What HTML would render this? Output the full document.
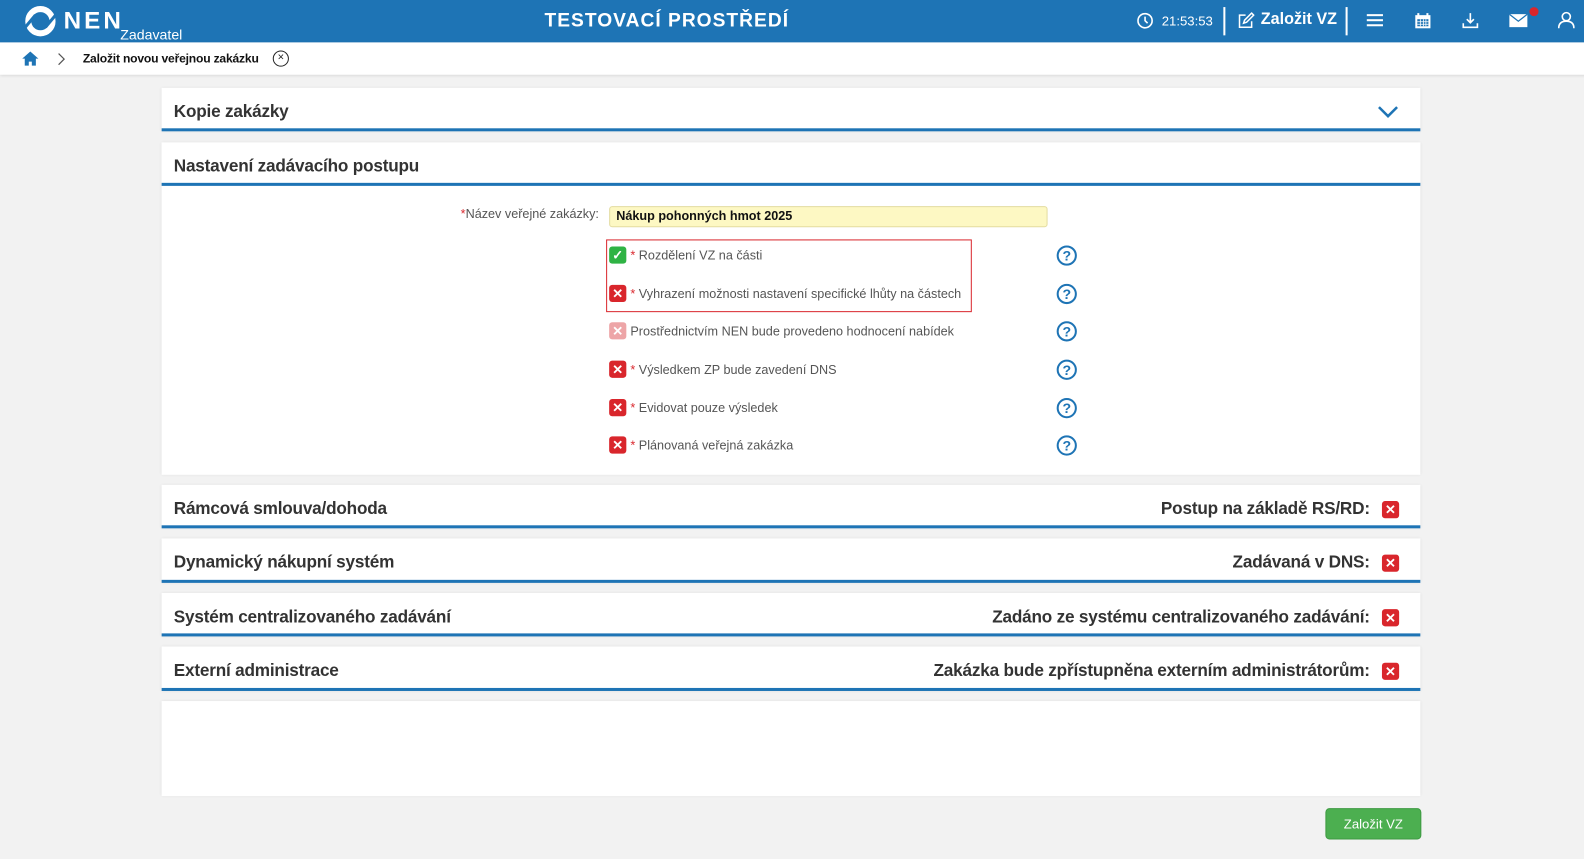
<!DOCTYPE html>
<html><head><meta charset="utf-8"><style>
*{margin:0;padding:0;box-sizing:border-box}
body{width:1584px;height:850px;background:#f2f2f2;font-family:"Liberation Sans",sans-serif;position:relative;overflow:hidden;color:#333}
#w{position:absolute;left:0;top:0;width:1584px;height:850px;transform:scale(1.0102);transform-origin:0 0}
.top{position:absolute;left:0;top:0;width:1584px;height:42px;background:#1e74b5;color:#fff}
.bc{position:absolute;left:0;top:42px;width:1584px;height:32px;background:#fff;box-shadow:0 1px 3px rgba(0,0,0,.12)}
.abs{position:absolute}
.panel{position:absolute;left:160px;width:1246px;background:#fff;border-bottom:3px solid #1e74b5;box-shadow:0 0 3px rgba(0,0,0,.08)}
.ph{position:absolute;left:12px;font-size:17px;letter-spacing:-0.2px;font-weight:bold;color:#333}
.pr{position:absolute;right:50px;font-size:17px;letter-spacing:-0.2px;font-weight:bold;color:#333}
.xb{position:absolute;width:17px;height:17px;border-radius:3px;background:#d9262c;color:#fff;font-size:13px;font-weight:bold;text-align:center;line-height:17px}
.row{position:absolute;left:603px;font-size:12.5px;color:#555;height:18px;line-height:18px}
.row .xb,.row .cb{left:0;top:0}
.row span.t{position:absolute;left:21px;white-space:nowrap}
.cb{position:absolute;width:17px;height:17px;border-radius:3px;background:#2fb344;color:#fff;text-align:center;line-height:17px;font-size:13px;font-weight:bold}
.st{color:#d9262c}
.help{position:absolute;left:1046px;width:20px;height:20px;border:2px solid #1e74b5;border-radius:50%;color:#1e74b5;font-size:14px;font-weight:bold;text-align:center;line-height:16px}
</style></head><body><div id="w">
<div class="top">
 <svg class="abs" style="left:23px;top:5px" width="34" height="32" viewBox="0 0 34 32"><circle cx="17" cy="16" r="12" fill="none" stroke="#fff" stroke-width="6"/><path d="M2 22 L12 10" stroke="#1e74b5" stroke-width="3"/><path d="M22 22 L32 10" stroke="#1e74b5" stroke-width="3"/></svg>
 <div class="abs" style="left:63px;top:7px;font-size:24px;font-weight:bold;letter-spacing:3px">NEN</div>
 <div class="abs" style="left:119px;top:26px;font-size:14px">Zadavatel</div>
 <div class="abs" style="left:539px;top:10px;font-size:19px;font-weight:bold;letter-spacing:1px">TESTOVACÍ PROSTŘEDÍ</div>
 <svg class="abs" style="left:1125px;top:12px" width="17" height="17" viewBox="0 0 17 17"><circle cx="8.5" cy="8.5" r="7" fill="none" stroke="#fff" stroke-width="1.6"/><path d="M8.5 4.5V8.5L11 11" stroke="#fff" stroke-width="1.6" fill="none"/></svg>
 <div class="abs" style="left:1150px;top:13px;font-size:13px">21:53:53</div>
 <div class="abs" style="left:1211px;top:7px;width:2px;height:28px;background:#fff"></div>
 <svg class="abs" style="left:1224px;top:12px" width="18" height="18" viewBox="0 0 18 18"><path d="M9 3H3v12h12V9" fill="none" stroke="#fff" stroke-width="1.5"/><path d="M7 11l1-3 7-7 2 2-7 7z" fill="none" stroke="#fff" stroke-width="1.5"/></svg>
 <div class="abs" style="left:1248px;top:11px;font-size:16px;font-weight:bold">Založit VZ</div>
 <div class="abs" style="left:1332px;top:7px;width:2px;height:28px;background:#fff"></div>
 <div class="abs" style="left:1353px;top:14px;width:16px;height:2px;background:#fff;box-shadow:0 5px 0 #fff,0 10px 0 #fff"></div>
 <svg class="abs" style="left:1400px;top:12px" width="17" height="17" viewBox="0 0 17 17"><rect x="1" y="3" width="15" height="13" fill="#fff"/><rect x="3" y="7" width="11" height="7" fill="#1e74b5"/><path d="M4 1v4M13 1v4" stroke="#fff" stroke-width="2"/><path d="M3 9.5h11M3 12h11M6 7v7M9 7v7M11.5 7v7" stroke="#fff" stroke-width="0.8"/></svg>
 <svg class="abs" style="left:1447px;top:12px" width="17" height="17" viewBox="0 0 17 17"><path d="M8.5 1v9M5 7l3.5 3.5L12 7" fill="none" stroke="#fff" stroke-width="1.6"/><path d="M1.5 11v4h14v-4" fill="none" stroke="#fff" stroke-width="1.6"/></svg>
 <svg class="abs" style="left:1494px;top:13px" width="18" height="14" viewBox="0 0 18 14"><rect x="0" y="1" width="18" height="13" fill="#fff"/><path d="M0 1l9 7 9-7" fill="none" stroke="#1e74b5" stroke-width="1.3"/></svg>
 <div class="abs" style="left:1514px;top:7px;width:9px;height:9px;border-radius:50%;background:#d9262c"></div>
 <svg class="abs" style="left:1542px;top:11px" width="17" height="18" viewBox="0 0 17 18"><circle cx="8.5" cy="5.5" r="4" fill="none" stroke="#fff" stroke-width="1.6"/><path d="M1 17c0-5 3-7 7.5-7s7.5 2 7.5 7" fill="none" stroke="#fff" stroke-width="1.6"/></svg>
</div>
<div class="bc">
 <svg class="abs" style="left:21px;top:8px" width="18" height="16" viewBox="0 0 18 16"><path d="M9 1L1 8h2.5v7h4v-4h3v4h4V8H17z" fill="#1e74b5"/></svg>
 <svg class="abs" style="left:57px;top:10px" width="8" height="13" viewBox="0 0 8 13"><path d="M1 1l5.5 5.5L1 12" fill="none" stroke="#555" stroke-width="1.2"/></svg>
 <div class="abs" style="left:82px;top:9px;font-size:12px;font-weight:bold;color:#111;letter-spacing:-0.2px">Založit novou veřejnou zakázku</div>
 <div class="abs" style="left:270px;top:8px;width:16px;height:16px;border:1.5px solid #222;border-radius:50%;font-size:11px;line-height:12px;text-align:center;color:#222">×</div>
</div>

<div class="panel" style="top:87px;height:43px"><div class="ph" style="top:14px">Kopie zakázky</div>
<svg class="abs" style="left:1203px;top:17px" width="22" height="13" viewBox="0 0 22 13"><path d="M2 2l9 9 9-9" fill="none" stroke="#1e74b5" stroke-width="2.5"/></svg></div>

<div class="abs" style="left:160px;top:141px;width:1246px;height:329px;background:#fff;box-shadow:0 0 3px rgba(0,0,0,.08)"></div>
<div class="panel" style="top:141px;height:43px;box-shadow:none"><div class="ph" style="top:14px">Nastavení zadávacího postupu</div></div>

<div class="abs" style="left:456px;top:205px;font-size:12.5px;color:#555"><span class="st">*</span>Název veřejné zakázky:</div>
<div class="abs" style="left:603px;top:204px;width:434px;height:21px;background:#fdf8c3;border:1px solid #e3dca0;border-radius:3px;font-size:12.5px;font-weight:bold;color:#111;padding:2px 6px">Nákup pohonných hmot 2025</div>
<div class="abs" style="left:600px;top:237px;width:362px;height:72px;border:1px solid #d9262c"></div>

<div class="row" style="top:244px"><div class="cb">✓</div><span class="t"><span class="st">*</span> Rozdělení VZ na části</span></div>
<div class="row" style="top:282px"><div class="xb">✕</div><span class="t"><span class="st">*</span> Vyhrazení možnosti nastavení specifické lhůty na částech</span></div>
<div class="row" style="top:319px"><div class="xb" style="background:#eda5a7">✕</div><span class="t">Prostřednictvím NEN bude provedeno hodnocení nabídek</span></div>
<div class="row" style="top:357px"><div class="xb">✕</div><span class="t"><span class="st">*</span> Výsledkem ZP bude zavedení DNS</span></div>
<div class="row" style="top:395px"><div class="xb">✕</div><span class="t"><span class="st">*</span> Evidovat pouze výsledek</span></div>
<div class="row" style="top:432px"><div class="xb">✕</div><span class="t"><span class="st">*</span> Plánovaná veřejná zakázka</span></div>
<div class="help" style="top:243px">?</div>
<div class="help" style="top:281px">?</div>
<div class="help" style="top:318px">?</div>
<div class="help" style="top:356px">?</div>
<div class="help" style="top:394px">?</div>
<div class="help" style="top:431px">?</div>

<div class="panel" style="top:480px;height:43px"><div class="ph" style="top:14px">Rámcová smlouva/dohoda</div><div class="pr" style="top:14px">Postup na základě RS/RD:</div><div class="xb" style="left:1208px;top:16px">✕</div></div>
<div class="panel" style="top:533px;height:44px"><div class="ph" style="top:14px">Dynamický nákupní systém</div><div class="pr" style="top:14px">Zadávaná v DNS:</div><div class="xb" style="left:1208px;top:16px">✕</div></div>
<div class="panel" style="top:587px;height:43px"><div class="ph" style="top:14px">Systém centralizovaného zadávání</div><div class="pr" style="top:14px">Zadáno ze systému centralizovaného zadávání:</div><div class="xb" style="left:1208px;top:16px">✕</div></div>
<div class="panel" style="top:640px;height:44px"><div class="ph" style="top:14px">Externí administrace</div><div class="pr" style="top:14px">Zakázka bude zpřístupněna externím administrátorům:</div><div class="xb" style="left:1208px;top:16px">✕</div></div>

<div class="abs" style="left:160px;top:694px;width:1246px;height:94px;background:#fff;box-shadow:0 0 3px rgba(0,0,0,.08)"></div>
<div class="abs" style="left:1312px;top:800px;width:95px;height:31px;background:#4caf50;border:1px solid #3e9a42;border-radius:4px;color:#fff;font-size:13px;text-align:center;line-height:29px">Založit VZ</div>
</div></body></html>
